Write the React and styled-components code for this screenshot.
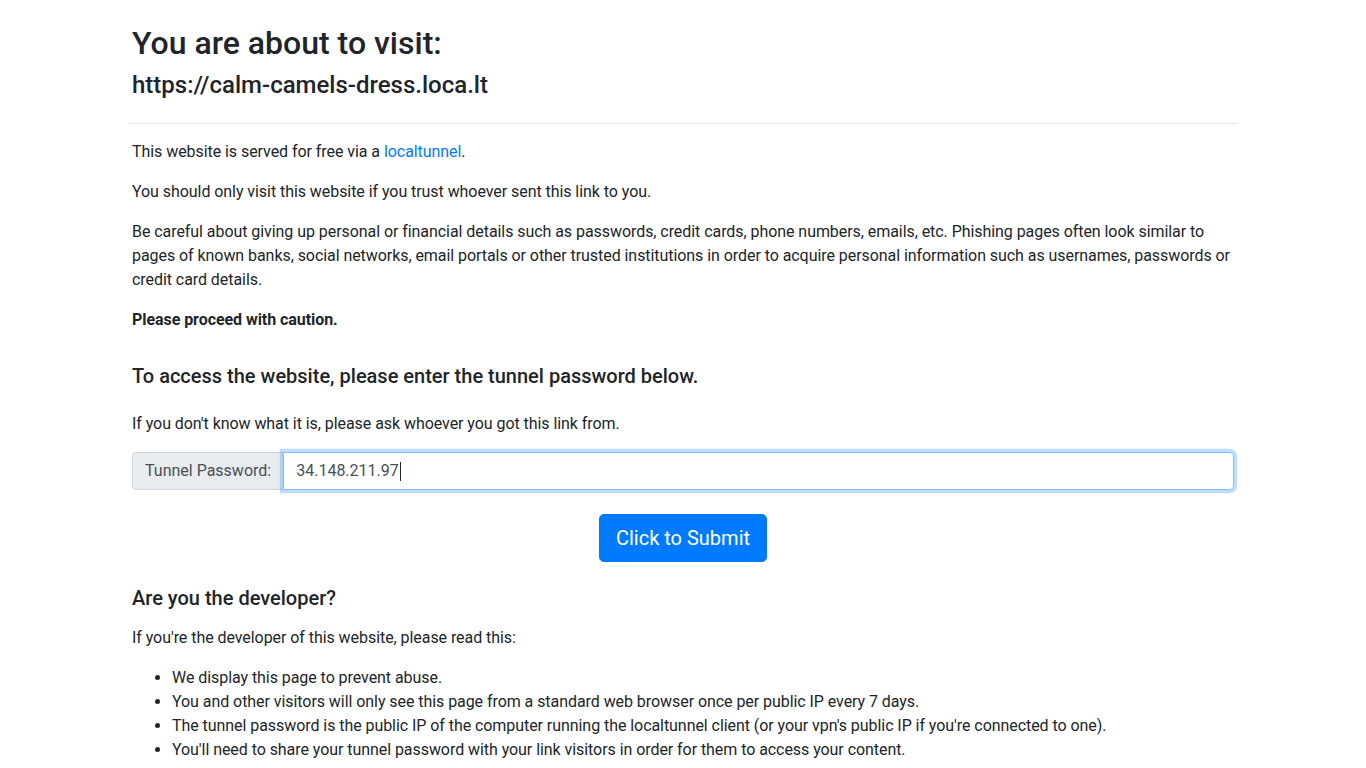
import React from 'react';
import styled, { createGlobalStyle } from 'styled-components';

const GlobalStyle = createGlobalStyle`
  html, body {
    margin: 0;
    padding: 0;
    background: #fff;
  }
  body {
    font-family: Roboto, "Helvetica Neue", Arial, sans-serif;
    font-size: 16px;
    line-height: 1.5;
    color: #212529;
    letter-spacing: -0.06px;
  }
`;

const Container = styled.div`
  width: 1110px;
  margin: 0 auto;
  padding-top: 24px;
`;

const Header = styled.header`
  padding: 0 4px;
  letter-spacing: 0;
`;

const Title = styled.h1`
  margin: 0 0 9px;
  font-size: 32px;
  font-weight: 500;
  line-height: 1.2;
`;

const Url = styled.h4`
  margin: 0 0 8px;
  font-size: 24px;
  font-weight: 500;
  line-height: 1.2;
`;

const Rule = styled.hr`
  margin: 23px 0 16px;
  border: 0;
  border-top: 1px solid rgba(0, 0, 0, 0.1);
`;

const Body = styled.main`
  padding: 0 4px;
`;

const Text = styled.p`
  margin: 0 0 16px;
  font-weight: ${({ $bold }) => ($bold ? 700 : 400)};
`;

const Link = styled.a`
  color: #007bff;
  text-decoration: none;
`;

const Heading = styled.h5`
  margin: ${({ $top }) => $top}px 0 ${({ $bottom }) => $bottom}px;
  font-size: 20px;
  font-weight: 500;
  line-height: 1.2;
  letter-spacing: 0;
`;

const InputGroup = styled.div`
  display: flex;
  align-items: stretch;
  width: 100%;
`;

const Addon = styled.span`
  display: flex;
  align-items: center;
  padding: 6px 12px;
  background: #e9ecef;
  border: 1px solid #ced4da;
  border-radius: 4px 0 0 4px;
  color: #495057;
  white-space: nowrap;
  letter-spacing: 0;
`;

const Field = styled.div`
  flex: 1;
  display: flex;
  align-items: center;
  height: 24px;
  padding: 6px 12px;
  margin-left: -1px;
  border: 1px solid #80bdff;
  border-radius: 0 4px 4px 0;
  box-shadow: 0 0 0 3.2px rgba(0, 123, 255, 0.25);
  color: #495057;
  letter-spacing: 0;
  position: relative;
  z-index: 1;
`;

const Caret = styled.span`
  display: inline-block;
  width: 1px;
  height: 19px;
  background: #212529;
  margin-left: 1px;
`;

const ButtonRow = styled.div`
  display: flex;
  justify-content: center;
  margin: 24px 0 24px;
`;

const Button = styled.button`
  font-family: inherit;
  font-size: 20px;
  line-height: 1.5;
  padding: 8px 16px;
  color: #fff;
  background: #007bff;
  border: 1px solid #007bff;
  border-radius: 4.8px;
  letter-spacing: 0;
  cursor: pointer;
`;

const List = styled.ul`
  margin: 0 0 16px;
  padding-left: 40px;
`;

export default function App() {
  return (
    <>
      <GlobalStyle />
      <Container>
        <Header>
          <Title>You are about to visit:</Title>
          <Url>https://calm-camels-dress.loca.lt</Url>
        </Header>
        <Rule />
        <Body>
          <Text>
            This website is served for free via a <Link href="#">localtunnel</Link>.
          </Text>
          <Text>You should only visit this website if you trust whoever sent this link to you.</Text>
          <Text>
            Be careful about giving up personal or financial details such as passwords, credit cards,
            phone numbers, emails, etc. Phishing pages often look similar to pages of known banks,
            social networks, email portals or other trusted institutions in order to acquire personal
            information such as usernames, passwords or credit card details.
          </Text>
          <Text $bold>Please proceed with caution.</Text>

          <Heading $top={32} $bottom={24}>
            To access the website, please enter the tunnel password below.
          </Heading>
          <Text>If you don't know what it is, please ask whoever you got this link from.</Text>
          <InputGroup>
            <Addon>Tunnel Password:</Addon>
            <Field>
              34.148.211.97
              <Caret />
            </Field>
          </InputGroup>
          <ButtonRow>
            <Button type="button">Click to Submit</Button>
          </ButtonRow>

          <Heading $top={0} $bottom={16}>Are you the developer?</Heading>
          <Text>If you're the developer of this website, please read this:</Text>
          <List>
            <li>We display this page to prevent abuse.</li>
            <li>You and other visitors will only see this page from a standard web browser once per public IP every 7 days.</li>
            <li>The tunnel password is the public IP of the computer running the localtunnel client (or your vpn's public IP if you're connected to one).</li>
            <li>You'll need to share your tunnel password with your link visitors in order for them to access your content.</li>
          </List>
        </Body>
      </Container>
    </>
  );
}
